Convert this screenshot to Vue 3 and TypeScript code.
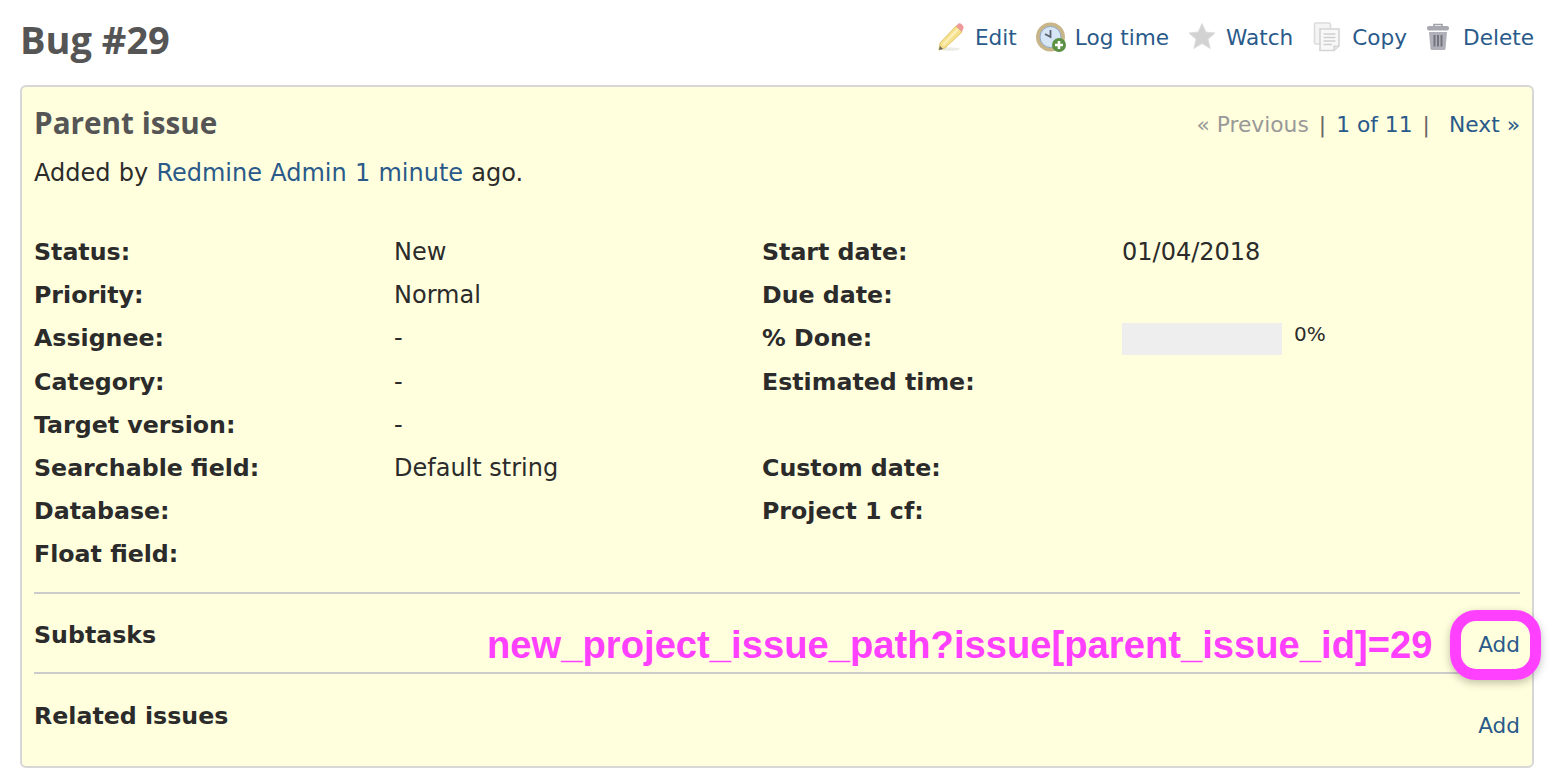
<script setup lang="ts">
interface Attr { label: string; value?: string; progress?: boolean }
const attrs: Attr[] = [
  { label: 'Status:', value: 'New' }, { label: 'Start date:', value: '01/04/2018' },
  { label: 'Priority:', value: 'Normal' }, { label: 'Due date:' },
  { label: 'Assignee:', value: '-' }, { label: '% Done:', progress: true },
  { label: 'Category:', value: '-' }, { label: 'Estimated time:' },
  { label: 'Target version:', value: '-' }, { label: '' },
  { label: 'Searchable field:', value: 'Default string' }, { label: 'Custom date:' },
  { label: 'Database:' }, { label: 'Project 1 cf:' },
  { label: 'Float field:' }, { label: '' },
]
</script>

<template>
  <div class="page">
    <header class="top">
      <h2 class="title">Bug #29</h2>
      <nav class="actions">
        <a class="action edit">
          <svg width="28" height="30" viewBox="0 0 28 30">
            <ellipse cx="12" cy="27" rx="11" ry="1.8" fill="#ecece6" />
            <path d="M3 21 L19 4 L25 10 L8 26 L2 28 Z" fill="#f6e08c" stroke="#e0c76a" stroke-width="1" />
            <path d="M6 23 L21 7" stroke="#fbefb8" stroke-width="2.5" />
            <path d="M19 4 L21.5 1.5 Q23 1 24.5 2 L26.5 4.5 Q27 6 26 7 L25 10 Z" fill="#ee9a9a" />
            <path d="M3 24 L2 28 L6 27 Z" fill="#666" />
          </svg>
          <span>Edit</span>
        </a>
        <a class="action log">
          <svg width="32" height="30" viewBox="0 0 32 30">
            <circle cx="15.5" cy="15" r="14.5" fill="#c8b68a" />
            <circle cx="15.5" cy="15" r="10.5" fill="#d6e6f6" stroke="#8fa9c8" stroke-width="1" />
            <path d="M15.5 8 V15 L10 12" fill="none" stroke="#5a6270" stroke-width="1.8" />
            <circle cx="24" cy="23" r="7" fill="#5a9144" />
            <path d="M24 19 V27 M20 23 H28" stroke="#fff" stroke-width="2.6" />
          </svg>
          <span>Log time</span>
        </a>
        <a class="action watch">
          <svg width="28" height="30" viewBox="0 0 28 30">
            <path d="M14 1.5 L17.8 10 L27 11 L20 17.2 L22.2 26.5 L14 21.6 L5.8 26.5 L8 17.2 L1 11 L10.2 10 Z" fill="#d2d2d2" stroke="#dedede" stroke-width="1" />
          </svg>
          <span>Watch</span>
        </a>
        <a class="action copy">
          <svg width="28" height="30" viewBox="0 0 28 30">
            <rect x="2.5" y="1" width="16" height="21" rx="1.5" fill="#f4f4f4" stroke="#dcdcdc" stroke-width="1.6" />
            <path d="M8 7 H27 V24 L22 28.5 H8 Z" fill="#f8f8f8" stroke="#d4d4d4" stroke-width="1.6" />
            <path d="M11.5 12 H23.5 M11.5 15.5 H23.5 M11.5 19 H23.5 M11.5 22.5 H20" stroke="#cfcfcf" stroke-width="1.4" />
            <path d="M22 28.5 V24 H27" fill="#e4e4e4" stroke="#cfcfcf" stroke-width="1.2" />
          </svg>
          <span>Copy</span>
        </a>
        <a class="action del">
          <svg width="24" height="28" viewBox="0 0 24 28">
            <path d="M8 3 V1.5 H16 V3" fill="none" stroke="#a0a0a8" stroke-width="1.6" />
            <rect x="1" y="3" width="22" height="4.5" rx="2" fill="#a8a8b0" />
            <path d="M3 9 H21 L19.5 26 Q19.4 27 18 27 H6 Q4.6 27 4.5 26 Z" fill="#b0b0b8" />
            <path d="M8.5 12 V23.5 M12 12 V23.5 M15.5 12 V23.5" stroke="#74747e" stroke-width="2" />
          </svg>
          <span>Delete</span>
        </a>
      </nav>
    </header>

    <section class="card">
      <div class="subject">
        <h3 class="subject-title">Parent issue</h3>
        <div class="pager">
          <span class="muted">« Previous</span>
          <span class="sep">|</span>
          <a>1 of 11</a>
          <span class="sep">|</span>
          <a class="next">Next »</a>
        </div>
      </div>
      <p class="author">Added by <a>Redmine Admin</a> <a>1 minute</a> ago.</p>

      <div class="attrs">
        <template v-for="(a, i) in attrs" :key="i">
          <div class="label">{{ a.label }}</div>
          <div class="value">
            <template v-if="a.progress">
              <div class="progress"><span class="bar"></span><span class="pct">0%</span></div>
            </template>
            <template v-else>{{ a.value }}</template>
          </div>
        </template>
      </div>

      <div class="block first">
        <span class="block-title">Subtasks</span>
        <a class="add">Add</a>
      </div>
      <div class="block second">
        <span class="block-title">Related issues</span>
        <a class="add">Add</a>
      </div>

      <div class="note">new_project_issue_path?issue[parent_issue_id]=29</div>
      <div class="ring"></div>
    </section>
  </div>
</template>

<style>
html, body { margin: 0; background: #fff; overflow: hidden; }
</style>

<style scoped>
.page {
  width: 1550px;
  height: 784px;
  box-sizing: border-box;
  padding: 0 16px 0 20px;
  font-family: "DejaVu Sans", sans-serif;
  font-size: 24px;
  color: #2b2b2b;
}
a { color: #2a5a8a; }
.top {
  height: 85px;
  display: flex;
  justify-content: space-between;
  align-items: flex-start;
}
.title {
  margin: 14px 0 0;
  font-family: "Open Sans", sans-serif;
  font-weight: 700;
  font-size: 38px;
  line-height: 50px;
  color: #555;
}
.actions {
  display: flex;
  align-items: center;
  height: 30px;
  margin-top: 22px;
  font-size: 21.6px;
}
.action { display: flex; align-items: center; gap: 10px; }
.log { margin-left: 18px; gap: 8px; }
.watch { margin-left: 19px; gap: 10px; }
.copy { margin-left: 19px; gap: 12px; }
.del { margin-left: 19px; gap: 13px; }
.action svg { flex: none; }
.card {
  position: relative;
  box-sizing: border-box;
  height: 683px;
  border: 2px solid #d7d7d7;
  border-radius: 6px;
  background: #ffffdd;
  padding: 0 12px 0 12px;
}
.subject {
  display: flex;
  justify-content: space-between;
  align-items: center;
  height: 44px;
  margin-top: 13px;
}
.subject-title {
  margin: 0;
  font-family: "Open Sans", sans-serif;
  font-weight: 700;
  font-size: 29.7px;
  color: #555;
}
.pager { font-size: 21.8px; display: flex; gap: 10px; margin-top: 4px; }
.muted { color: #999; }
.sep { color: #666; }
.next { margin-left: 9px; }
.author { margin: 0; height: 28px; line-height: 28px; margin-top: 15px; word-spacing: 0.6px; }
.attrs {
  display: grid;
  grid-template-columns: 360px 368px 360px 1fr;
  grid-auto-rows: 43.2px;
  margin-top: 44px;
  line-height: 43.2px;
}
.label { font-weight: 700; font-size: 23.7px; }
.progress { display: flex; align-items: flex-start; height: 43px; }
.bar { display: block; width: 160px; height: 32px; background: #eee; margin-top: 6px; }
.pct { font-size: 20px; line-height: 22px; margin-left: 12px; margin-top: 6px; }
.block {
  position: relative;
  height: 78px;
  border-top: 2px solid #ccc;
  box-sizing: content-box;
}
.first { margin-top: 15px; }
.block-title { display: block; font-weight: 700; font-size: 23.7px; line-height: 28px; padding-top: 27px; }
.second .block-title { padding-top: 28px; }
.add {
  position: absolute;
  right: 0;
  top: 37px;
  line-height: 28px;
  font-size: 21.6px;
}
.second .add { top: 38px; }
.note {
  position: absolute;
  left: 465px;
  top: 535px;
  font-family: "Liberation Sans", sans-serif;
  font-weight: 700;
  font-size: 38.2px;
  line-height: 46px;
  color: #ff40ff;
  white-space: nowrap;
}
.ring {
  position: absolute;
  left: 1428px;
  top: 523px;
  width: 91px;
  height: 70px;
  box-sizing: border-box;
  border: 11px solid #ff40ff;
  border-radius: 26px;
  box-shadow: 0 3px 8px rgba(0, 0, 0, 0.25);
}
</style>
